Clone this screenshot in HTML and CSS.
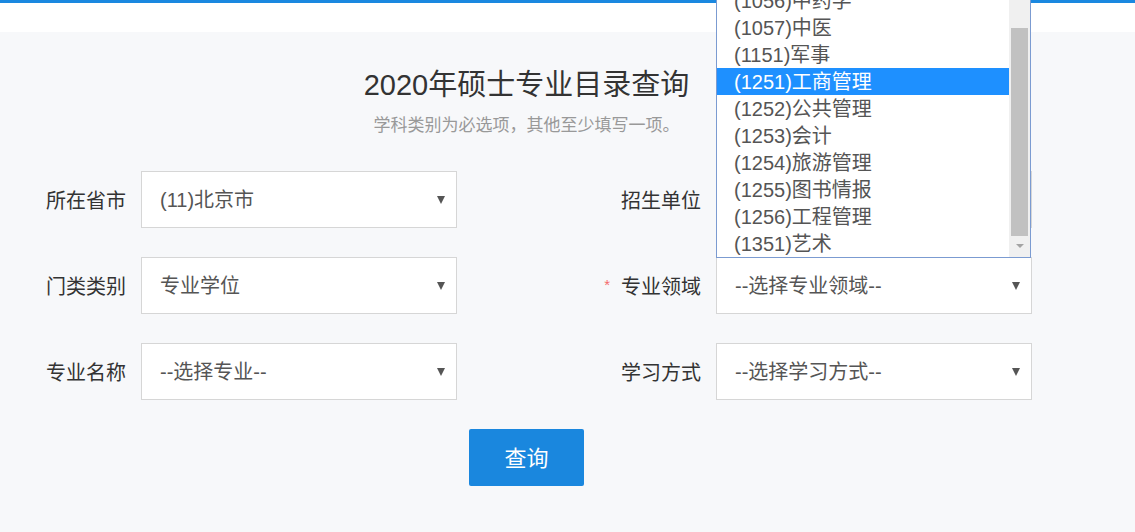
FILE: index.html
```html
<!DOCTYPE html>
<html lang="zh-CN">

<head>
    <meta charset="UTF-8">
    <meta name="viewport" content="width=device-width, initial-scale=1.0">
    <title>硕士专业目录查询</title>
    <link rel="stylesheet" href="styles.css">
</head>

<body>
    <!-- 顶部 -->
    <div class="topbar"></div>
    <div class="header"></div>

    <div class="main">
        <h1 class="title">2020年硕士专业目录查询</h1>
        <p class="tip">学科类别为必选项，其他至少填写一项。</p>

        <!-- 查询表单 -->
        <div class="form">
            <div class="field">
                <label class="label">所在省市</label>
                <div class="select">(11)北京市<i class="arrow"></i></div>
            </div>
            <div class="field">
                <label class="label">招生单位</label>
                <div class="select"><i class="arrow"></i></div>
            </div>
            <div class="field">
                <label class="label">门类类别</label>
                <div class="select">专业学位<i class="arrow"></i></div>
            </div>
            <div class="field">
                <label class="label"><span class="star">*</span>专业领域</label>
                <div class="select">--选择专业领域--<i class="arrow"></i>

                    <!-- 展开的下拉列表 -->
                    <div class="dropdown">
                        <ul class="options">
                            <li>(1056)中药学</li>
                            <li>(1057)中医</li>
                            <li>(1151)军事</li>
                            <li class="active">(1251)工商管理</li>
                            <li>(1252)公共管理</li>
                            <li>(1253)会计</li>
                            <li>(1254)旅游管理</li>
                            <li>(1255)图书情报</li>
                            <li>(1256)工程管理</li>
                            <li>(1351)艺术</li>
                        </ul>
                        <div class="scrollbar">
                            <div class="thumb"></div>
                            <i class="down"></i>
                        </div>
                    </div>
                </div>
            </div>
            <div class="field">
                <label class="label">专业名称</label>
                <div class="select">--选择专业--<i class="arrow"></i></div>
            </div>
            <div class="field">
                <label class="label">学习方式</label>
                <div class="select">--选择学习方式--<i class="arrow"></i></div>
            </div>
        </div>

        <div class="btn-row">
            <button class="btn">查询</button>
        </div>
    </div>
</body>

</html>
```

FILE: styles.css
```css
body,
h1,
p,
ul,
li {
    margin: 0;
    padding: 0;
}

li {
    list-style: none;
}

body {
    font-family: "Liberation Sans", "Noto Sans CJK SC", sans-serif;
    background-color: #f7f8fa;
    color: #333;
}

.topbar {
    height: 3px;
    background-color: #1a88e0;
}

.header {
    height: 29px;
    background-color: #fff;
}

.main {
    width: 1053px;
    padding-top: 33px;
    padding-bottom: 60px;
    text-align: center;
}

.title {
    font-size: 29px;
    font-weight: normal;
    line-height: 40px;
    color: #333;
}

.tip {
    margin-top: 9px;
    font-size: 17px;
    line-height: 24px;
    color: #999;
}

.form {
    display: grid;
    grid-template-columns: 435px 435px;
    column-gap: 140px;
    row-gap: 29px;
    margin-top: 33px;
    padding-left: 22px;
}

.field {
    display: flex;
    align-items: center;
}

.label {
    width: 104px;
    margin-right: 15px;
    text-align: right;
    font-size: 20px;
    color: #333;
}

.star {
    margin-right: 11px;
    font-size: 15px;
    color: #f56c6c;
    vertical-align: 4px;
}

.select {
    position: relative;
    box-sizing: border-box;
    width: 316px;
    height: 57px;
    padding-left: 18px;
    line-height: 56px;
    text-align: left;
    font-size: 20px;
    color: #555;
    background-color: #fff;
    border: 1px solid #d6d6d6;
}

.arrow {
    position: absolute;
    top: 24px;
    right: 11px;
    width: 0;
    height: 0;
    border-top: 8px solid #555;
    border-left: 4px solid transparent;
    border-right: 4px solid transparent;
}

/* 下拉列表 */
.dropdown {
    position: absolute;
    bottom: 100%;
    left: -1px;
    width: 315px;
    box-sizing: border-box;
    background-color: #fff;
    border: 1px solid #7b9bd1;
    z-index: 5;
}

.options li {
    width: 292px;
    height: 27px;
    padding-left: 17px;
    box-sizing: border-box;
    line-height: 28px;
    font-size: 20px;
    color: #555;
}

.options li.active {
    color: #fff;
    background-color: #1e90ff;
}

.scrollbar {
    position: absolute;
    top: 0;
    right: 0;
    bottom: 0;
    width: 21px;
    background-color: #f0f0f0;
}

.thumb {
    position: absolute;
    top: 41px;
    left: 2px;
    width: 17px;
    height: 208px;
    background-color: #c1c1c1;
}

.down {
    position: absolute;
    bottom: 9px;
    left: 7px;
    width: 0;
    height: 0;
    border-top: 4px solid #a3a3a3;
    border-left: 4px solid transparent;
    border-right: 4px solid transparent;
}

.btn-row {
    margin-top: 29px;
}

.btn {
    width: 115px;
    height: 57px;
    padding-bottom: 4px;
    font-family: "Liberation Sans", "Noto Sans CJK SC", sans-serif;
    font-size: 22px;
    color: #fff;
    background-color: #1a87de;
    border: none;
    border-radius: 2px;
    cursor: pointer;
}
```
